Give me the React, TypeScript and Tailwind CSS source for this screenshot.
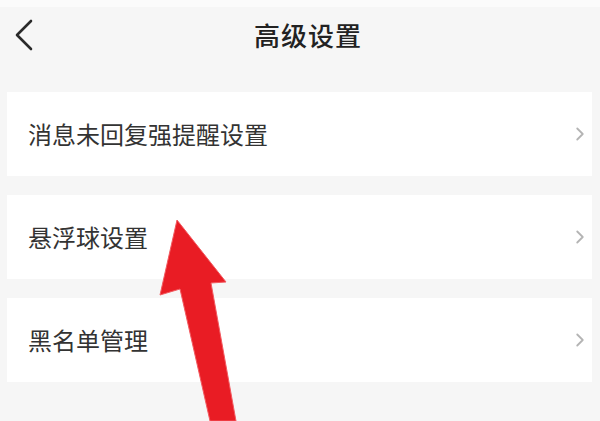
import { ChevronRight } from 'lucide-react';

const items = ['消息未回复强提醒设置', '悬浮球设置', '黑名单管理'];

export default function App() {
  return (
    <div
      className="relative w-[600px] h-[421px] overflow-hidden bg-[#f6f6f6]"
      style={{ fontFamily: '"Noto Sans CJK SC", "Noto Sans", sans-serif' }}
    >
      {/* 顶部 */}
      <div className="h-[7px] bg-[#fbfbfb]" />
      <div className="relative flex items-center justify-center h-[55px]">
        <svg
          className="absolute left-[14px] top-[12px]"
          width="20"
          height="32"
          viewBox="0 0 20 32"
          fill="none"
        >
          <path d="M17 2 L3 16 L17 30" stroke="#2a2a2a" strokeWidth="2.6" strokeLinecap="round" strokeLinejoin="round" />
        </svg>
        <h1 className="ml-[16px] text-[26px] leading-none font-medium text-[#222] tracking-[1px]">高级设置</h1>
      </div>
      <div className="h-[30px]" />

      {/* 列表 */}
      <div className="flex flex-col gap-[19px] px-[7px] pr-[8px]">
        {items.map((t) => (
          <div key={t} className="h-[84px] bg-white flex items-center justify-between pl-[21px] pr-[1px]">
            <span className="text-[24px] leading-none text-[#333]">{t}</span>
            <ChevronRight size={22} strokeWidth={2} className="text-[#b4b4b4]" />
          </div>
        ))}
      </div>

      {/* 红色箭头 */}
      <svg className="absolute left-0 top-0 pointer-events-none" width="600" height="421" viewBox="0 0 600 421">
        <polygon
          points="177,220 226,282 211,283 236,421 210,421 180,289 160,295"
          fill="#e91c24"
          stroke="#f25a60"
          strokeWidth="1"
          strokeLinejoin="round"
        />
      </svg>
    </div>
  );
}
